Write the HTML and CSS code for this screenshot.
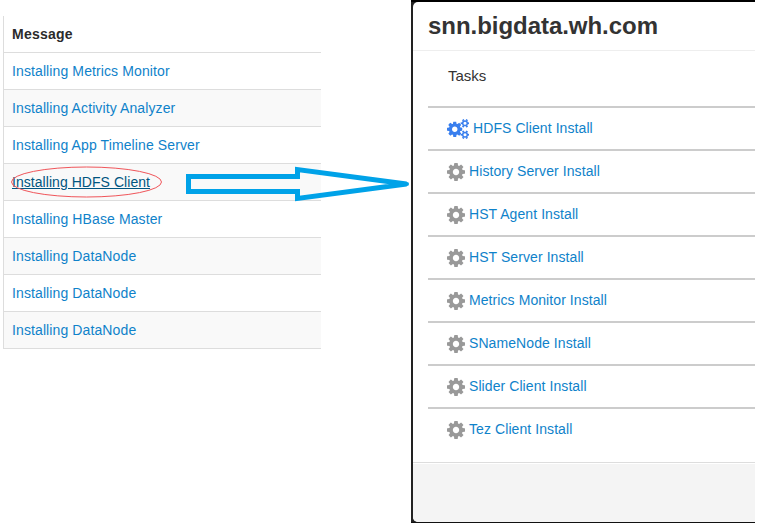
FILE: index.html
```
<!DOCTYPE html>
<html lang="en">
<head>
<meta charset="utf-8">
<title>Host installation tasks</title>
<link rel="stylesheet" href="styles.css">
</head>
<body>
<svg class="defs" aria-hidden="true">
  <symbol id="cog" viewBox="0 -128 1536 1536"><path d="M1040 640q0-113-80-192t-192-80-192 80-80 192 80 192 192 80 192-80 80-192zm496-109v222q0 12-8 23t-20 13l-185 28q-19 54-39 91 35 50 107 138 10 12 10 25t-9 23q-27 37-99 108t-94 71q-12 0-26-9l-138-108q-44 23-91 38-16 136-29 186-7 28-36 28h-222q-14 0-24.500-8.500t-11.500-21.500l-28-184q-49-16-90-37l-141 107q-10 9-25 9-14 0-25-11-126-114-165-168-7-10-7-23 0-12 8-23 15-21 51-66.500t54-70.500q-27-50-41-99l-183-27q-13-2-21-12.500t-8-23.500v-222q0-12 8-23t19-13l186-28q14-46 39-92-40-57-107-138-10-12-10-24 0-10 9-23 26-36 98.500-107.500t94.500-71.500q13 0 26 10l138 107q44-23 91-38 16-136 29-186 7-28 36-28h222q14 0 24.500 8.500t11.500 21.500l28 184q49 16 90 37l142-107q9-9 24-9 13 0 25 10 129 119 165 170 7 8 7 22 0 12-8 23-15 21-51 66.500t-54 70.500q26 50 41 98l183 28q13 2 21 12.500t8 23.500z"/></symbol>
</svg>
<main class="page">
  <table class="messages">
    <thead><tr><th>Message</th></tr></thead>
    <tbody>
      <tr><td><a>Installing Metrics Monitor</a></td></tr>
      <tr><td><a>Installing Activity Analyzer</a></td></tr>
      <tr><td><a>Installing App Timeline Server</a></td></tr>
      <tr><td><a class="hover">Installing HDFS Client</a></td></tr>
      <tr><td><a>Installing HBase Master</a></td></tr>
      <tr><td><a>Installing DataNode</a></td></tr>
      <tr><td><a>Installing DataNode</a></td></tr>
      <tr><td><a>Installing DataNode</a></td></tr>
    </tbody>
  </table>
  <section class="backdrop">
    <div class="modal">
      <h3>snn.bigdata.wh.com</h3>
      <div class="body">
        <div class="label">Tasks</div>
        <ul>
          <li class="running"><svg class="cogs" viewBox="0 0 22 20"><use href="#cog" x="0" y="2.500" width="15.500" height="15.500"/><g fill="none" stroke="currentColor"><circle cx="18" cy="4.300" r="2.300" stroke-width="1.500"/><circle cx="18" cy="4.300" r="3.600" stroke-width="1.500" pathLength="60" stroke-dasharray="5 5" stroke-dashoffset="2.500"/><circle cx="18" cy="15.700" r="2.300" stroke-width="1.500"/><circle cx="18" cy="15.700" r="3.600" stroke-width="1.500" pathLength="60" stroke-dasharray="5 5" stroke-dashoffset="2.500"/></g></svg><a>HDFS Client Install</a></li>
          <li><svg class="cog"><use href="#cog"/></svg><a>History Server Install</a></li>
          <li><svg class="cog"><use href="#cog"/></svg><a>HST Agent Install</a></li>
          <li><svg class="cog"><use href="#cog"/></svg><a>HST Server Install</a></li>
          <li><svg class="cog"><use href="#cog"/></svg><a>Metrics Monitor Install</a></li>
          <li><svg class="cog"><use href="#cog"/></svg><a>SNameNode Install</a></li>
          <li><svg class="cog"><use href="#cog"/></svg><a>Slider Client Install</a></li>
          <li><svg class="cog"><use href="#cog"/></svg><a>Tez Client Install</a></li>
        </ul>
      </div>
      <footer></footer>
    </div>
  </section>
  <svg class="annotation" viewBox="0 0 757 523">
    <ellipse cx="86.500" cy="182" rx="75" ry="15"/>
    <path d="M188.500 176.500H297.500V169.500L406.500 184L297.500 198.500V191.500H188.500Z"/>
    <path class="tip" d="M398 184H407"/>
  </svg>
</main>
</body>
</html>
```
FILE: styles.css
```
* { box-sizing: border-box; }
body { margin: 0; background: #fff; color: #333; font: 14px/20px "Liberation Sans", Arial, sans-serif; }
.defs { display: none; }
.page { position: relative; display: flex; align-items: flex-start; width: 757px; height: 523px; overflow: hidden; }
.messages { width: 318px; margin: 16px 0 0 3px; border-collapse: separate; border-spacing: 0; border-left: 1px solid #ddd; }
.messages th, .messages td { height: 37px; padding: 8px; border-bottom: 1px solid #ddd; text-align: left; }
.messages th { color: #2b2b2b; letter-spacing: 0.25px; }
.messages tbody tr:nth-child(even) { background: #f9f9f9; }
a { color: #0f82ca; letter-spacing: 0.11px; }
.messages .hover { color: #005580; text-decoration: underline; letter-spacing: 0.05px; }
.backdrop { width: 344px; height: 523px; margin-left: 90px; padding: 2px 0 1px 2px; background: linear-gradient(#000 0 2px, #222 2px 522px, #111 522px); }
.modal { display: flex; flex-direction: column; height: 520px; background: #fff; border-radius: 5px 0 0 5px; overflow: hidden; }
h3 { margin: 0; height: 49px; padding: 9px 15px 0; border-bottom: 1px solid #eee; font-size: 24px; line-height: 30px; letter-spacing: -0.04px; }
.body { height: 411px; padding: 15px 0 0 15px; }
.label { height: 40px; padding-left: 20px; font-size: 15px; }
ul { list-style: none; margin: 0; padding: 0; }
li { display: flex; align-items: center; gap: 4px; height: 43px; padding: 0 0 1px 19px; border-top: 2px solid #ccc; }
li a { letter-spacing: 0.08px; }
.cog { width: 18px; height: 18px; margin-top: 1px; fill: #999; }
.cogs { width: 22px; height: 20px; margin-top: 1px; fill: #397fee; color: #397fee; }
footer { flex: 1; border-top: 1px solid #ddd; background: #f4f4f4; box-shadow: inset 0 1px #fff; }
.annotation { position: absolute; left: 0; top: 0; width: 757px; height: 523px; fill: none; pointer-events: none; }
.annotation ellipse { stroke: #f0555a; stroke-width: 1; }
.annotation path { stroke: #00a2e8; stroke-width: 5; stroke-linejoin: miter; }
.annotation .tip { stroke-width: 4; stroke-linecap: round; }
```
